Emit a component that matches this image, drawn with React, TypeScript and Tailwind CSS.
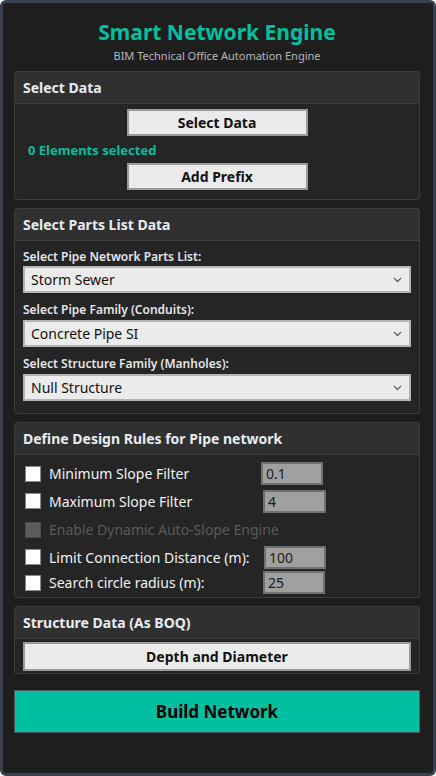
import React from "react";

const font = { fontFamily: '"Noto Sans", "Open Sans", sans-serif' };

function Section({ title, children, className = "" }: { title: string; children: React.ReactNode; className?: string }) {
  return (
    <div className={`border border-[#3c3c3c] rounded-[3px] bg-[#252525] overflow-hidden ${className}`}>
      <div className="h-[32px] bg-[#303030] border-b border-[#3e3e3e] flex items-center pl-[8px] text-[14px] font-bold text-[#e8ebf2]">
        {title}
      </div>
      {children}
    </div>
  );
}

function Select({ value }: { value: string }) {
  return (
    <div className="h-[27px] bg-[#ebebeb] border-[2px] border-[#b4b4b4] flex items-center justify-between pl-[6px] pr-[6px] text-[14px] text-[#111]">
      <span>{value}</span>
      <svg width="9" height="6" viewBox="0 0 9 6" className="mr-[1px]">
        <path d="M1 1 L4.5 4.5 L8 1" fill="none" stroke="#666" strokeWidth="1.4" />
      </svg>
    </div>
  );
}

function Check({ label, disabled }: { label: string; disabled?: boolean }) {
  return (
    <div className="flex items-center">
      <div
        className={`w-[16px] h-[16px] ml-[10px] border ${disabled ? "bg-[#5c5c5c] border-[#4c4c4c]" : "bg-white border-[#8a8a8a]"}`}
      />
      <span className={`ml-[8px] text-[14px] ${disabled ? "text-[#5a5a5a]" : "text-[#f2f2f2]"}`}>{label}</span>
    </div>
  );
}

function NumBox({ value, className }: { value: string; className: string }) {
  return (
    <div className={`ml-auto h-[23px] w-[62px] bg-[#a0a0a0] border-[2px] border-[#707070] flex items-center pl-[3px] text-[14px] text-[#1c1c1c] ${className}`}>
      {value}
    </div>
  );
}

export default function App() {
  return (
    <div style={font} className="w-[436px] h-[776px] border-[3px] border-[#394150] rounded-[6px] bg-[#1e1e1e] flex flex-col pl-[11px] pr-[13px]">
      <div className="pt-[15px] text-center text-[21px] font-bold text-[#00bf9f] leading-[28px]">Smart Network Engine</div>
      <div className="text-center text-[11px] text-[#b4b8bf] leading-[16px] mt-[2px]">BIM Technical Office Automation Engine</div>

      <Section title="Select Data" className="mt-[7px]">
        <div className="flex flex-col items-center pt-[5px] pb-[9px]">
          <button className="w-[181px] h-[27px] bg-[#ebebeb] border-[2px] border-[#9a9a9a] text-[14px] font-bold text-[#111]">
            Select Data
          </button>
          <div className="self-start ml-[13px] mt-[5px] h-[20px] flex items-center text-[13px] font-bold text-[#00bf9f]">0 Elements selected</div>
          <button className="mt-[2px] w-[181px] h-[27px] bg-[#ebebeb] border-[2px] border-[#9a9a9a] text-[14px] font-bold text-[#111]">
            Add Prefix
          </button>
        </div>
      </Section>

      <Section title="Select Parts List Data" className="mt-[8px]">
        <div className="flex flex-col px-[8px] pt-[6px] pb-[12px]">
          <div className="text-[12px] font-semibold text-[#e4e6ea] h-[19px] flex items-center">Select Pipe Network Parts List:</div>
          <Select value="Storm Sewer" />
          <div className="text-[12px] font-semibold text-[#e4e6ea] h-[27px] flex items-center pt-[7px]">Select Pipe Family (Conduits):</div>
          <Select value="Concrete Pipe SI" />
          <div className="text-[12px] font-semibold text-[#e4e6ea] h-[27px] flex items-center pt-[7px]">Select Structure Family (Manholes):</div>
          <Select value="Null Structure" />
        </div>
      </Section>

      <Section title="Define Design Rules for Pipe network" className="mt-[8px]">
        <div className="flex flex-col pt-[5px] pb-[2px]">
          <div className="flex items-center h-[27px]">
            <Check label="Minimum Slope Filter" />
            <NumBox value="0.1" className="mr-[96px]" />
          </div>
          <div className="flex items-center h-[28px]">
            <Check label="Maximum Slope Filter" />
            <NumBox value="4" className="mr-[93px] w-[63px]" />
          </div>
          <div className="flex items-center h-[29px]">
            <Check label="Enable Dynamic Auto-Slope Engine" disabled />
          </div>
          <div className="flex items-center h-[26px]">
            <Check label="Limit Connection Distance (m):" />
            <NumBox value="100" className="mr-[93px]" />
          </div>
          <div className="flex items-center h-[25px]">
            <Check label="Search circle radius (m):" />
            <NumBox value="25" className="mr-[94px]" />
          </div>
        </div>
      </Section>

      <Section title="Structure Data (As BOQ)" className="mt-[8px]">
        <div className="px-[8px] pt-[3px] pb-[2px]">
          <button className="w-full h-[29px] bg-[#ebebeb] border-[2px] border-[#9a9a9a] text-[14px] font-bold text-[#111]">
            Depth and Diameter
          </button>
        </div>
      </Section>

      <button className="mt-[16px] h-[43px] w-full bg-[#00bfa0] border border-[#555] text-[17px] font-bold text-black">
        Build Network
      </button>
    </div>
  );
}
